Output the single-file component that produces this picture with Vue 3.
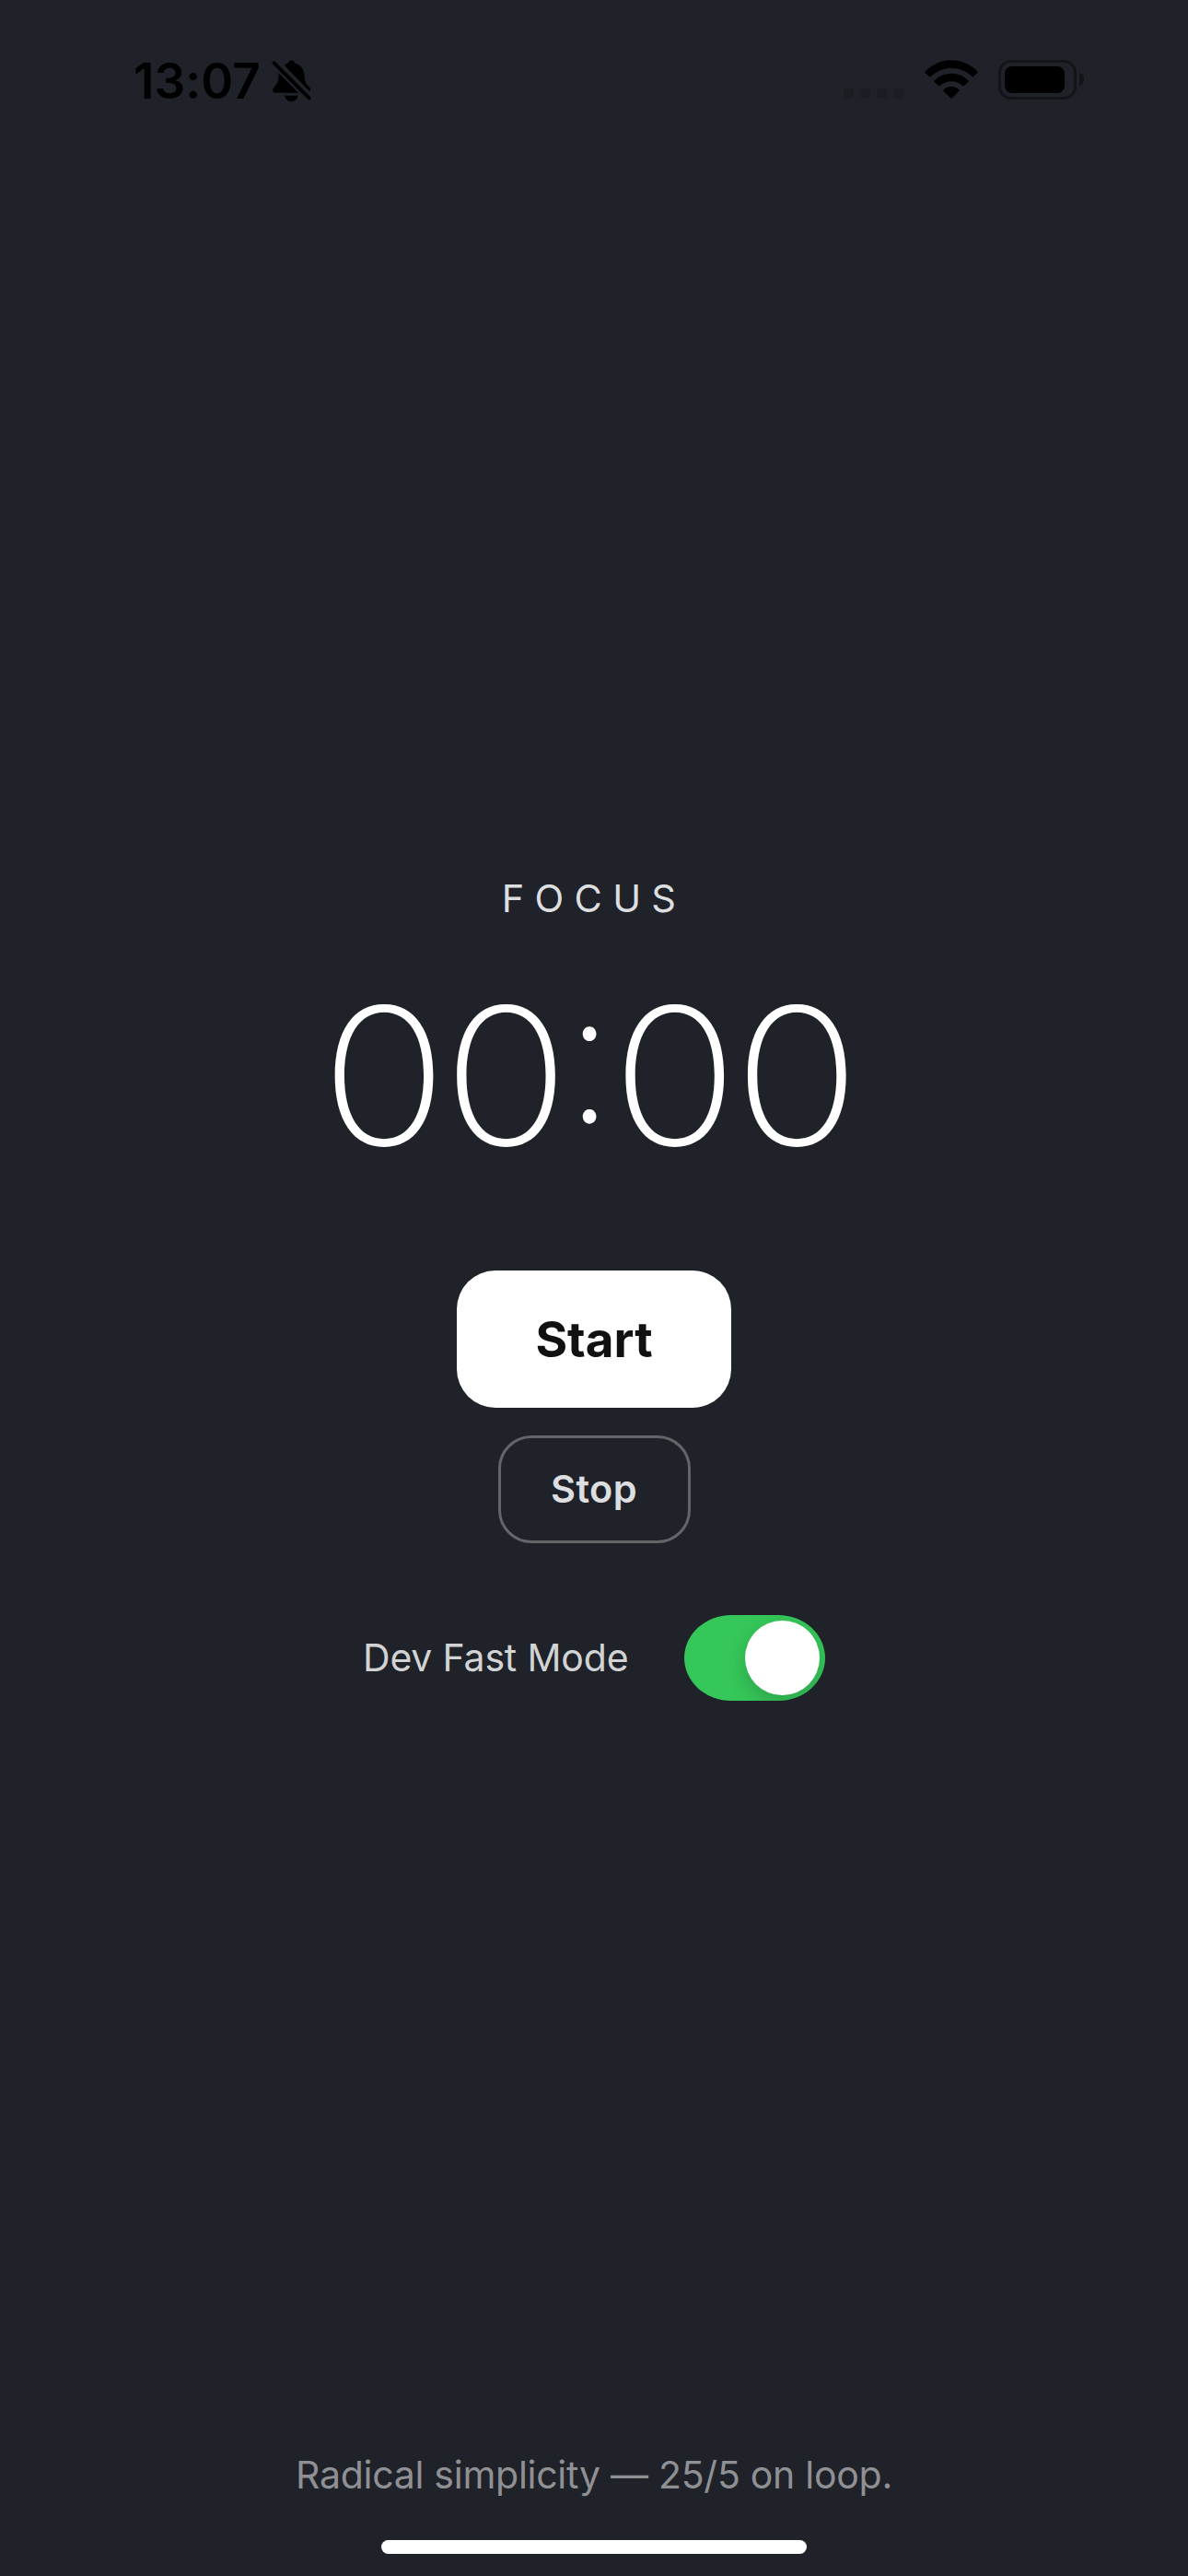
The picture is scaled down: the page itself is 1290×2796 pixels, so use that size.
<script setup>
import { ref } from 'vue'

const mode = ref('FOCUS')
const minutes = ref('00')
const seconds = ref('00')
const fast = ref(true)
</script>

<template>
  <main class="screen">
    <header class="status">
      <div class="clock">
        <span class="clock-time">13:07</span>
        <svg class="bell" width="44" height="48" viewBox="0 0 44 48">
          <path d="M14.2 7.2C15 5.6 16.6 5 18 4.6C18.4 2.4 19.8 1.6 21.5 1.6S24.6 2.4 25 4.6C31 6.2 34.8 10.6 35.4 17C35.8 22 36.2 25.4 38.6 28.4L41.6 31.4C42.4 32.4 42.2 34 41.2 35.2Z" />
          <path d="M7.8 15.6L29 36.8H4.5C1 36.8 .2 33.6 2.2 31.4C5.6 27.4 7.4 24.6 7.6 19Z" />
          <path d="M14.2 39.8H28.6C28 43.6 25 46.2 21.4 46.2S14.8 43.6 14.2 39.8Z" />
          <path d="M2.6 4.4L40.6 42.4" fill="none" stroke="#000" stroke-width="3.8" stroke-linecap="round" />
        </svg>
      </div>
      <div class="signals">
        <div class="dots"><i v-for="n in 4" :key="n" /></div>
        <svg class="wifi" width="58" height="43" viewBox="0 0 58 43">
          <path d="M.8 12.2C17 -3.6 41 -3.6 57.2 12.2Q58.2 13.2 57.2 14.2L53.2 18.1Q52.4 18.8 51.6 18.1C38.4 6 19.6 6 6.4 18.1Q5.6 18.8 4.8 18.1L.8 14.2Q-.2 13.2.8 12.2Z" />
          <path d="M10.8 22.2C21.4 12.4 36.6 12.4 47.2 22.2Q48.1 23.1 47.2 24L43 28.1Q42.2 28.8 41.3 28.1C34 21.6 24 21.6 16.7 28.1Q15.8 28.8 15 28.1L10.8 24Q9.9 23.1 10.8 22.2Z" />
          <path d="M20.8 32.2C25.6 28 32.4 28 37.2 32.2Q38.2 33 37.3 34L29.7 41.5Q29 42.1 28.3 41.5L20.7 34Q19.8 33 20.8 32.2Z" />
        </svg>
        <div class="battery"><div class="level" /></div>
        <div class="nub" />
      </div>
    </header>

    <section class="timer">
      <div class="mode">{{ mode }}</div>
      <div class="time">{{ minutes }}<span class="colon">:</span>{{ seconds }}</div>
      <button class="start">Start</button>
      <button class="stop">Stop</button>
      <div class="option">
        <span class="option-label">Dev Fast Mode</span>
        <div class="switch" :class="{ on: fast }" @click="fast = !fast"><div class="knob" /></div>
      </div>
    </section>

    <footer class="footer">
      <p class="tagline">Radical simplicity — 25/5 on loop.</p>
      <div class="home" />
    </footer>
  </main>
</template>

<style>
body { background: #1f2229; }
</style>

<style scoped>
.screen {
  width: 1290px;
  height: 2796px;
  overflow: hidden;
  display: flex;
  flex-direction: column;
  background: #1f2229;
  color: #fff;
  font-family: Inter, "Liberation Sans", sans-serif;
}
.status {
  display: flex;
  justify-content: space-between;
  height: 947px;
  flex: none;
  box-sizing: border-box;
  padding: 64px 113px 0 144px;
}
.clock { display: flex; height: 48px; color: #000; }
.clock-time {
  width: 150px;
  padding-left: 1px;
  font-size: 53px;
  font-weight: 600;
  line-height: 49px;
  letter-spacing: 0.1px;
  white-space: nowrap;
}
.signals { display: flex; align-items: flex-start; }
.dots { display: flex; gap: 7px; margin: 32px 23px 0 0; }
.dots i { width: 11px; height: 11px; border-radius: 4px; background: #1a1d22; }
.wifi { margin: 1px 22px 0 0; }
.battery {
  width: 85px;
  height: 43px;
  margin-top: 1px;
  box-sizing: border-box;
  padding: 4px;
  border: 3px solid #121518;
  border-radius: 14px;
}
.level { width: 65px; height: 29px; border-radius: 8px; background: #000; }
.nub { width: 5px; height: 14px; margin: 15px 0 0 3px; border-radius: 0 5px 5px 0 / 0 7px 7px 0; background: #121518; }

.timer { display: flex; flex-direction: column; align-items: center; }
.mode {
  height: 56px;
  font-size: 41.5px;
  line-height: 56px;
  letter-spacing: 11.3px;
  color: #dddee0;
}
.time {
  height: 260px;
  margin-top: 34px;
  padding-right: 12px;
  font-size: 208px;
  font-weight: 200;
  line-height: 260px;
  letter-spacing: -4.7px;
  transform: scaleX(1.095);
}
.colon {
  display: inline-block;
  margin: 0 -1.6px 0 -2.8px;
  font-size: 201px;
  line-height: 0;
  font-feature-settings: "case";
  transform: translateY(-3px) scaleX(0.85);
}
button { box-sizing: border-box; padding: 0; font-family: inherit; }
.start {
  width: 298px;
  height: 149px;
  margin-top: 82px;
  border: 0;
  border-radius: 42px;
  background: #fff;
  color: #111;
  font-size: 53px;
  font-weight: 700;
}
.stop {
  width: 209px;
  height: 117px;
  margin-top: 30px;
  padding-bottom: 2px;
  border: 3px solid #636569;
  border-radius: 36px;
  background: none;
  color: #dddee0;
  font-size: 41.5px;
  font-weight: 600;
  letter-spacing: 0.4px;
}
.option {
  display: flex;
  align-items: center;
  justify-content: space-between;
  width: 502px;
  height: 93px;
  margin-top: 78px;
}
.option-label { padding-bottom: 1px; font-size: 41px; letter-spacing: -0.18px; color: #d2d3d4; white-space: nowrap; }
.switch {
  display: flex;
  width: 153px;
  height: 93px;
  box-sizing: border-box;
  padding: 6px;
  overflow: hidden;
  border-radius: 51px / 46.5px;
  background: #5b5d61;
}
.switch.on { justify-content: flex-end; background: #35c759; }
.knob { width: 81px; height: 81px; border-radius: 50%; background: #fff; box-shadow: 0 8px 22px rgba(0, 0, 0, 0.18); }

.footer { margin-top: auto; display: flex; flex-direction: column; align-items: center; }
.tagline { margin: 0; height: 56px; font-size: 41px; line-height: 56px; letter-spacing: -0.27px; color: #8f9094; white-space: nowrap; }
.home { width: 462px; height: 15px; margin: 43px 0 24px; border-radius: 8px; background: #fff; }
</style>
